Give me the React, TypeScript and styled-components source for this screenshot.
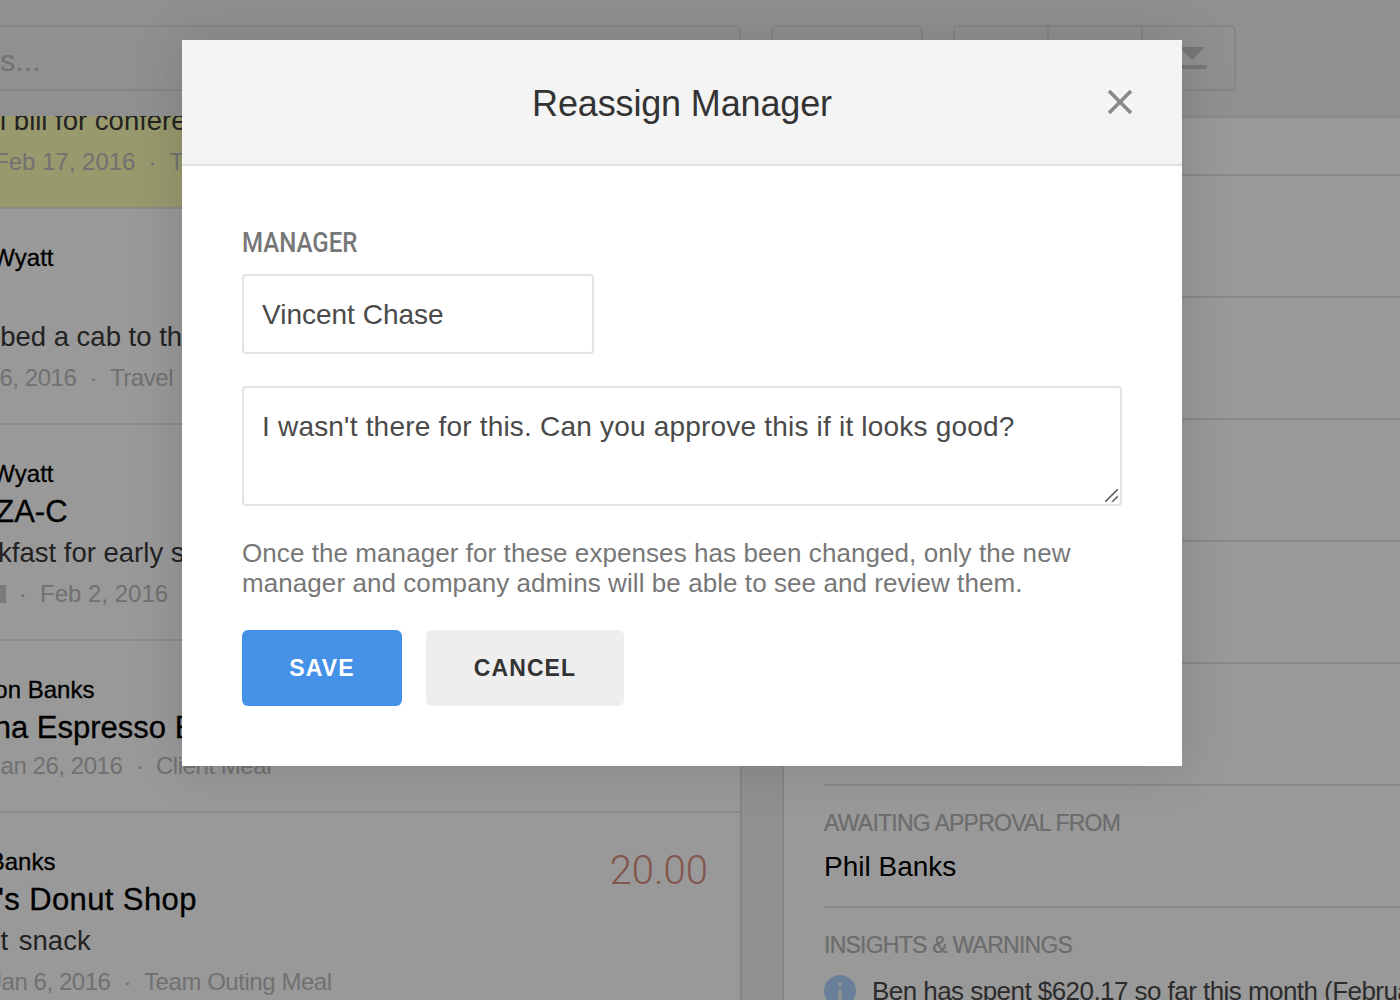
import React from 'react';
import styled, { createGlobalStyle } from 'styled-components';

const colors = {
  band: '#f0f0f0',
  line: '#e6e6e6',
  outline: '#dedede',
  meta: '#bcbcbc',
  field: '#e2e2e2',
  blue: '#4591e8',
};

const GlobalStyle = createGlobalStyle`
  html, body {
    margin: 0;
    padding: 0;
    background: #fff;
    font-family: 'Liberation Sans', Arial, sans-serif;
  }
  * { box-sizing: border-box; }
`;

const Page = styled.div`
  width: 1400px;
  height: 1000px;
  overflow: hidden;
  display: flex;
  flex-direction: column;
  position: relative;
`;

const Toolbar = styled.div`
  height: 116px;
  flex: none;
  background: ${colors.band};
  padding-top: 25px;
  display: flex;
  align-items: flex-start;
  gap: 30px;
`;

const SearchBox = styled.div`
  width: 761px;
  margin-left: -20px;
  height: 66px;
  border: 2px solid ${colors.outline};
  border-radius: 6px;
  display: flex;
  align-items: center;
  overflow: hidden;
  font-size: 30px;
  color: #bdbdbd;
  white-space: nowrap;
  padding-left: 18px;
`;

const SearchText = styled.span`
  margin-left: -218px;
  margin-top: 6px;
  letter-spacing: 0.1px;
`;

const ToolButton = styled.div`
  width: 152px;
  height: 66px;
  border: 2px solid ${colors.outline};
  border-radius: 6px;
`;

const ButtonGroup = styled.div`
  width: 283px;
  height: 66px;
  border: 2px solid ${colors.outline};
  border-radius: 6px;
  display: flex;
`;

const GroupCell = styled.div`
  width: 94px;
  flex: none;
  display: flex;
  align-items: center;
  justify-content: center;
  & + & { border-left: 2px solid ${colors.outline}; }
  &:first-child { width: 92px; }
  &:last-child { flex: 1; padding-left: 6px; }
`;

const Body = styled.div`
  flex: 1;
  min-height: 0;
  display: flex;
`;

const ListColumn = styled.div`
  width: 742px;
  flex: none;
  border-right: 2px solid ${colors.outline};
  overflow: hidden;
  background: #fff;
`;

const ListInner = styled.div`
  margin-top: -123px;
`;

const Row = styled.div<{ $highlight?: boolean }>`
  display: flex;
  justify-content: space-between;
  padding: 32px 32px 28px 0;
  border-bottom: 2px solid ${colors.line};
  background: ${({ $highlight }) => ($highlight ? '#ffffb7' : '#fff')};
`;

const RowText = styled.div`
  flex: 1;
  min-width: 0;
  white-space: nowrap;
`;

const Name = styled.div<{ $shift: number }>`
  margin-left: ${({ $shift }) => $shift}px;
  font-size: 24px;
  line-height: 34px;
  color: #000;
  -webkit-text-stroke: 0.3px #000;
`;

const Merchant = styled.div<{ $shift: number; $spread?: boolean }>`
  margin-left: ${({ $shift }) => $shift}px;
  font-size: 31px;
  line-height: 42px;
  color: #000;
  letter-spacing: ${({ $spread }) => ($spread ? '0.4px' : '0')};
  -webkit-text-stroke: 0.3px #000;
`;

const Description = styled.div<{ $shift: number; $wide?: boolean }>`
  margin-left: ${({ $shift }) => $shift}px;
  margin-bottom: 4px;
  font-size: 27.5px;
  line-height: 40px;
  color: #3a3a3a;
  word-spacing: ${({ $wide }) => ($wide ? '3px' : '0')};
`;

const Meta = styled.div<{ $shift: number; $tight?: boolean }>`
  margin-left: ${({ $shift }) => $shift}px;
  font-size: 24px;
  line-height: 34px;
  color: ${colors.meta};
  letter-spacing: ${({ $tight }) => ($tight ? '-0.45px' : '0')};
  display: flex;
  align-items: center;
`;

const Dot = styled.span`
  margin: 0 13px;
`;

const Amount = styled.div`
  margin-top: 1px;
  font-family: Roboto, 'Liberation Sans', sans-serif;
  font-weight: 300;
  font-size: 40px;
  line-height: 50px;
  color: #dc8f80;
`;

const Gutter = styled.div`
  width: 40px;
  flex: none;
  background: ${colors.band};
`;

const Detail = styled.div`
  flex: 1;
  min-width: 0;
  background: #fff;
  border-left: 2px solid ${colors.outline};
  padding-left: 40px;
  overflow: hidden;
`;

const TopRule = styled.div`
  height: 58px;
  margin-left: -40px;
  border-top: 2px solid ${colors.line};
`;

const DetailRow = styled.div`
  height: 122px;
  border-top: 2px solid ${colors.line};
  padding-top: 21px;
`;

const DetailLabel = styled.div`
  font-size: 23px;
  line-height: 32px;
  letter-spacing: -0.75px;
  color: #b4b4b4;
  -webkit-text-stroke: 0.2px #b4b4b4;
`;

const DetailValue = styled.div`
  margin-top: 10px;
  font-size: 28px;
  line-height: 36px;
  color: #000;
`;

const InsightRow = styled.div`
  display: flex;
  align-items: flex-start;
  gap: 16px;
  margin-top: 14px;
  white-space: nowrap;
  font-size: 26px;
  line-height: 32px;
  letter-spacing: -0.55px;
  color: #4a4a4a;
`;

const Overlay = styled.div`
  position: absolute;
  inset: 0;
  background: rgba(0, 0, 0, 0.4);
`;

const Modal = styled.div`
  position: absolute;
  left: 182px;
  top: 40px;
  width: 1000px;
  height: 726px;
  background: #fff;
  box-shadow: 0 0 50px rgba(0, 0, 0, 0.14);
  display: flex;
  flex-direction: column;
`;

const ModalHeader = styled.div`
  height: 126px;
  flex: none;
  background: #f4f4f4;
  border-bottom: 2px solid #e0e0e0;
  display: flex;
  align-items: center;
  justify-content: center;
  position: relative;
`;

const ModalTitle = styled.h2`
  margin: 3px 0 0;
  font-size: 36px;
  font-weight: 400;
  color: #333;
  letter-spacing: -0.15px;
`;

const CloseButton = styled.button`
  position: absolute;
  right: 48px;
  top: 48px;
  width: 28px;
  height: 28px;
  padding: 0;
  border: none;
  background: transparent;
  display: flex;
`;

const ModalBody = styled.div`
  flex: 1;
  padding: 60px 60px 0;
`;

const FieldLabel = styled.label`
  display: block;
  font-family: Roboto, 'Liberation Sans', sans-serif;
  font-weight: 500;
  font-size: 28px;
  line-height: 34px;
  color: #777;
  margin-bottom: 14px;
  transform: scaleX(0.86);
  transform-origin: left center;
`;

const ManagerInput = styled.input`
  display: block;
  width: 352px;
  height: 80px;
  padding: 2px 18px 0;
  border: 2px solid ${colors.field};
  border-radius: 4px;
  background: #fff;
  font-family: 'Liberation Sans', Arial, sans-serif;
  font-size: 28px;
  color: #4a4a4a;
  outline: none;
`;

const NoteWrap = styled.div`
  position: relative;
  margin-top: 32px;
`;

const NoteInput = styled.textarea`
  display: block;
  width: 880px;
  height: 120px;
  padding: 22px 18px;
  border: 2px solid ${colors.field};
  border-radius: 4px;
  background: #fff;
  font-family: 'Liberation Sans', Arial, sans-serif;
  font-size: 28px;
  line-height: 34px;
  color: #4a4a4a;
  letter-spacing: 0.2px;
  outline: none;
  resize: none;
`;

const ResizeGrip = styled.svg`
  position: absolute;
  right: 4px;
  bottom: 4px;
`;

const HelpText = styled.p`
  margin: 32px 0 0;
  font-size: 26px;
  line-height: 30px;
  letter-spacing: 0.07px;
  color: #777;
`;

const Actions = styled.div`
  display: flex;
  gap: 24px;
  margin-top: 32px;
`;

const ActionButton = styled.button<{ $primary?: boolean }>`
  width: ${({ $primary }) => ($primary ? '160px' : '198px')};
  height: 76px;
  border: none;
  border-radius: 6px;
  background: ${({ $primary }) => ($primary ? colors.blue : '#eee')};
  color: ${({ $primary }) => ($primary ? '#fff' : '#333')};
  font-family: 'Liberation Sans', Arial, sans-serif;
  font-size: 23px;
  font-weight: 700;
  letter-spacing: 1.1px;
`;

const DownloadIcon = () => (
  <svg width="30" height="22" viewBox="0 0 30 22" fill="#c6c6c6">
    <path d="M2 0h26L15 13z" />
    <rect x="0" y="18" width="30" height="4" />
  </svg>
);

const CloseIcon = () => (
  <svg width="28" height="28" viewBox="0 0 28 28" fill="none" stroke="#888" strokeWidth="3.6">
    <path d="M3 3l22 22M25 3L3 25" />
  </svg>
);

const InfoIcon = () => (
  <svg width="32" height="32" viewBox="0 0 32 32" style={{ flex: 'none' }}>
    <circle cx="16" cy="16" r="16" fill="#aed3ff" />
    <rect x="14" y="14" width="4" height="11" fill="#e8eef6" />
    <rect x="14" y="7" width="4" height="4" fill="#e8eef6" />
  </svg>
);

const App: React.FC = () => {
  return (
    <Page>
      <GlobalStyle />
      <Toolbar>
        <SearchBox>
          <SearchText>Search expenses...</SearchText>
        </SearchBox>
        <ToolButton />
        <ButtonGroup>
          <GroupCell />
          <GroupCell />
          <GroupCell>
            <DownloadIcon />
          </GroupCell>
        </ButtonGroup>
      </Toolbar>
      <Body>
        <ListColumn>
          <ListInner>
            <Row $highlight>
              <RowText>
                <Name $shift={-57}>Ben Wyatt</Name>
                <Merchant $shift={-60}>Hotel</Merchant>
                <Description $shift={-58}>Hotel bill for conference</Description>
                <Meta $shift={-6}>Feb 17, 2016<Dot>·</Dot>Travel</Meta>
              </RowText>
            </Row>
            <Row>
              <RowText>
                <Name $shift={-57}>Ben Wyatt</Name>
                <Merchant $shift={-90}>Uber</Merchant>
                <Description $shift={-61}>Grabbed a cab to the airport</Description>
                <Meta $shift={-57} $tight>Jan 26, 2016<Dot>·</Dot>Travel</Meta>
              </RowText>
            </Row>
            <Row>
              <RowText>
                <Name $shift={-57}>Ben Wyatt</Name>
                <Merchant $shift={-53}>PIZZA-C</Merchant>
                <Description $shift={-60}>Breakfast for early start</Description>
                <Meta $shift={-4}>
                  <svg width="10" height="20" viewBox="0 0 10 20" fill="#cccccc"><rect x="4" y="1" width="6" height="18" /></svg>
                  <Dot>·</Dot>Feb 2, 2016<Dot>·</Dot>Travel
                </Meta>
              </RowText>
            </Row>
            <Row>
              <RowText>
                <Name $shift={-43}>Jason Banks</Name>
                <Merchant $shift={-70}>Verona Espresso Bar</Merchant>
                <Meta $shift={-11} $tight>Jan 26, 2016<Dot>·</Dot>Client Meal</Meta>
              </RowText>
            </Row>
            <Row>
              <RowText>
                <Name $shift={-58}>Phil Banks</Name>
                <Merchant $shift={-101} $spread>Dunkin's Donut Shop</Merchant>
                <Description $shift={-108} $wide>Breakfast snack</Description>
                <Meta $shift={-10} $tight>Jan 6, 2016<Dot>·</Dot>Team Outing Meal</Meta>
              </RowText>
              <Amount>20.00</Amount>
            </Row>
          </ListInner>
        </ListColumn>
        <Gutter />
        <Detail>
          <TopRule />
          <DetailRow />
          <DetailRow />
          <DetailRow />
          <DetailRow />
          <DetailRow />
          <DetailRow>
            <DetailLabel>AWAITING APPROVAL FROM</DetailLabel>
            <DetailValue>Phil Banks</DetailValue>
          </DetailRow>
          <DetailRow>
            <DetailLabel>INSIGHTS &amp; WARNINGS</DetailLabel>
            <InsightRow>
              <InfoIcon />
              Ben has spent $620.17 so far this month (February)
            </InsightRow>
          </DetailRow>
        </Detail>
      </Body>
      <Overlay />
      <Modal>
        <ModalHeader>
          <ModalTitle>Reassign Manager</ModalTitle>
          <CloseButton aria-label="Close">
            <CloseIcon />
          </CloseButton>
        </ModalHeader>
        <ModalBody>
          <FieldLabel>MANAGER</FieldLabel>
          <ManagerInput defaultValue="Vincent Chase" />
          <NoteWrap>
            <NoteInput defaultValue="I wasn't there for this. Can you approve this if it looks good?" />
            <ResizeGrip width="13" height="13" viewBox="0 0 13 13" fill="none" stroke="#666" strokeWidth="1.6">
              <path d="M0 13L13 0M7 13l6-6" />
            </ResizeGrip>
          </NoteWrap>
          <HelpText>
            Once the manager for these expenses has been changed, only the new
            <br />
            manager and company admins will be able to see and review them.
          </HelpText>
          <Actions>
            <ActionButton $primary>SAVE</ActionButton>
            <ActionButton>CANCEL</ActionButton>
          </Actions>
        </ModalBody>
      </Modal>
    </Page>
  );
};

export default App;
